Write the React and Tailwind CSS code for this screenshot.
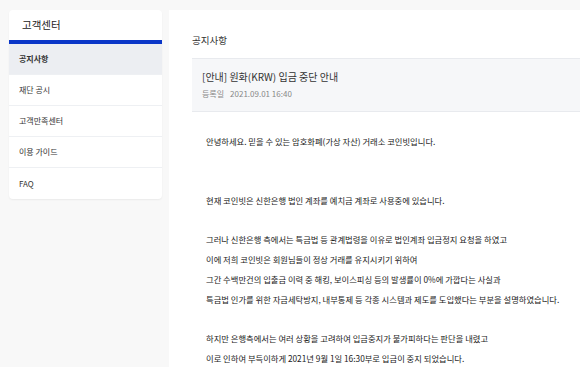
const MENU = ["공지사항", "재단 공시", "고객만족센터", "이용 가이드", "FAQ"];

const BODY = [
  "안녕하세요. 믿을 수 있는 암호화폐(가상 자산) 거래소 코인빗입니다.",
  "",
  "",
  "현재 코인빗은 신한은행 법인 계좌를 예치금 계좌로 사용중에 있습니다.",
  "",
  "그러나 신한은행 측에서는 특금법 등 관계법령을 이유로 법인계좌 입금정지 요청을 하였고",
  "이에 저희 코인빗은 회원님들이 정상 거래를 유지시키기 위하여",
  "그간 수백만건의 입출금 이력 중 해킹, 보이스피싱 등의 발생률이 0%에 가깝다는 사실과",
  "특금법 인가를 위한 자금세탁방지, 내부통제 등 각종 시스템과 제도를 도입했다는 부분을 설명하였습니다.",
  "",
  "하지만 은행측에서는 여러 상황을 고려하여 입금중지가 불가피하다는 판단을 내렸고",
  "이로 인하여 부득이하게 2021년 9월 1일 16:30부로 입금이 중지 되었습니다.",
];

function Sidebar() {
  return (
    <aside className="w-[153px] shrink-0 self-start bg-white rounded-sm shadow-[0_1px_2px_rgba(0,0,0,0.06)]">
      <div className="h-[30px] flex items-center pl-[13px] text-[10.5px] text-[#222]">고객센터</div>
      <div className="h-[4px] bg-[#0a36c8]" />
      {MENU.map((m, i) => (
        <div
          key={m}
          className={`h-[31px] flex items-center pl-[10px] text-[8px] text-[#333] ${
            i === 0 ? "bg-[#eceef2] font-bold" : ""
          } ${i < MENU.length - 1 ? "border-b border-[#eef0f3]" : ""}`}
        >
          {m}
        </div>
      ))}
    </aside>
  );
}

export default function App() {
  return (
    <div
      className="w-[580px] h-[367px] overflow-hidden bg-[#f8f8f8] flex gap-[7px] pl-[9px] pt-[10px]"
      style={{ fontFamily: '"Noto Sans CJK KR", "Noto Sans", sans-serif' }}
    >
      <Sidebar />
      <main className="flex-1 bg-white pl-[23px] pt-[22px] min-w-0">
        <h2 className="text-[9.5px] text-[#333] leading-[16px]">공지사항</h2>
        <div className="mt-[10px] h-[54px] bg-[#f6f7f9] border-y border-[#e8eaee] pl-[10px] pt-[10px]">
          <div className="text-[10px] text-[#333] leading-[16px]">[안내] 원화(KRW) 입금 중단 안내</div>
          <div className="mt-[3px] text-[8px] text-[#888] leading-[12px] flex gap-[6px]">
            <span>등록일</span>
            <span>2021.09.01 16:40</span>
          </div>
        </div>
        <div className="pl-[14px] pt-[20px] text-[8.3px] text-[#222] leading-[19.7px] whitespace-nowrap">
          {BODY.map((l, i) => (
            <p key={i} className="h-[19.7px]">{l}</p>
          ))}
        </div>
      </main>
    </div>
  );
}
